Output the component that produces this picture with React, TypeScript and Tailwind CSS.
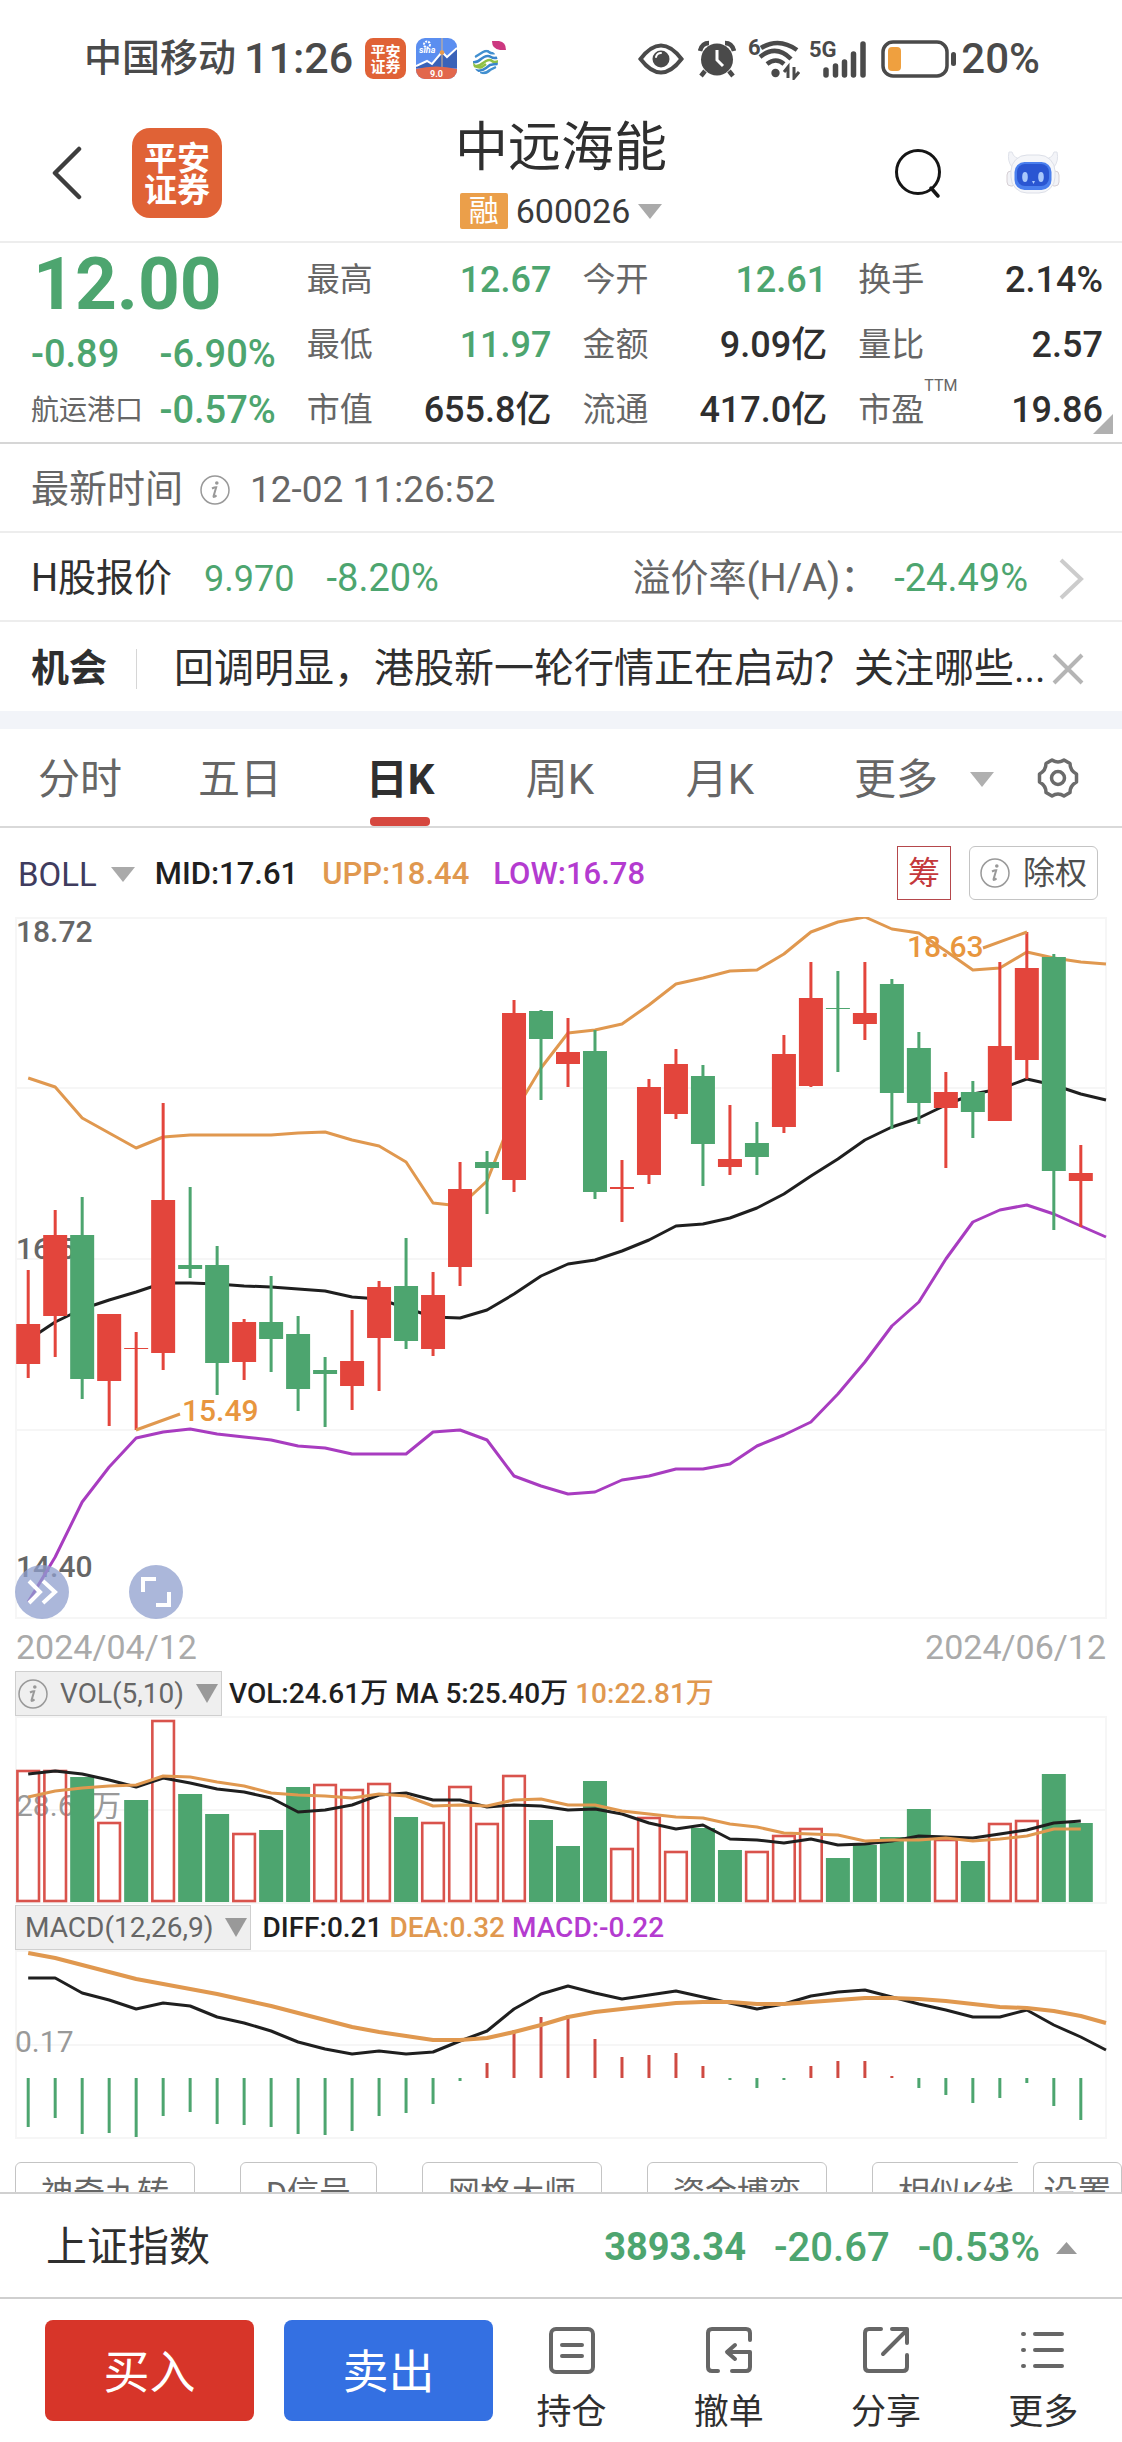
import React from "react";

const RED = "#e3453c";
const GREEN = "#4da56f";
const ORANGE = "#e0984f";
const PURPLE = "#a83cc0";
const BLACK = "#1f1f1f";
const GRID = "#f6f6f6";

/* Horizontal centre of the n-th trading day. */
const cx = (i: number) => 13.2 + i * 26.99;

const linePoints = (ys: number[]) =>
  ys.map((y, i) => `${i < 40 ? cx(i) : 1091},${y}`).join(" ");

type Dir = "R" | "G";

/* direction, high, body top, body bottom, low */
const CANDLES: [Dir, number, number, number, number][] = [
  ["R", 353, 407, 447, 461], ["R", 293, 318, 399, 440], ["G", 280, 318, 462, 482],
  ["R", 397, 397, 464, 509], ["R", 415, 431, 432, 513], ["R", 186, 283, 436, 453],
  ["G", 270, 348, 352, 361], ["G", 329, 348, 446, 478], ["R", 402, 405, 445, 463],
  ["G", 359, 405, 422, 455], ["G", 399, 417, 472, 494], ["G", 440, 453, 457, 510],
  ["R", 393, 444, 469, 493], ["R", 364, 370, 421, 474], ["G", 321, 369, 424, 432],
  ["R", 355, 378, 432, 439], ["R", 245, 272, 350, 369], ["G", 234, 245, 251, 297],
  ["R", 83, 96, 263, 275], ["G", 93, 94, 122, 183], ["R", 101, 135, 147, 170],
  ["G", 113, 134, 275, 282], ["R", 243, 270, 272, 305], ["R", 162, 170, 258, 267],
  ["R", 132, 147, 197, 202], ["G", 148, 159, 227, 269], ["R", 188, 242, 250, 258],
  ["G", 205, 226, 240, 258], ["R", 118, 137, 210, 216], ["R", 45, 81, 169, 170],
  ["G", 54, 91, 92, 155], ["R", 45, 96, 107, 123], ["G", 62, 67, 176, 212],
  ["G", 115, 131, 186, 207], ["R", 155, 175, 191, 251], ["G", 164, 175, 195, 221],
  ["R", 45, 129, 204, 204], ["R", 15, 51, 143, 162], ["G", 37, 40, 254, 313],
  ["R", 228, 256, 264, 310],
];

const UPP = [
  161, 170, 201, 216, 231, 220, 218, 218, 218, 218, 216, 215, 223, 229, 245, 286, 289, 264, 196, 151,
  116, 113, 107, 88, 67, 61, 54, 53, 37, 15, 5, 0, 12, 16, 34, 53, 51, 35, 41, 45, 47,
];
const MID = [
  423, 405, 392, 383, 375, 366, 366, 367, 369, 370, 372, 374, 380, 382, 391, 400, 401, 393, 377, 359,
  347, 343, 334, 323, 309, 307, 301, 291, 277, 259, 242, 223, 210, 201, 188, 177, 172, 162, 168, 177, 183,
];
const LOW = [
  685, 640, 585, 550, 521, 515, 512, 517, 520, 523, 529, 531, 537, 537, 537, 515, 513, 523, 559, 569,
  577, 575, 563, 559, 552, 552, 547, 529, 518, 505, 477, 445, 409, 385, 342, 305, 293, 288, 297, 309, 320,
];

const VOL_TOPS = [
  54, 54, 61, 106, 84, 4, 78, 98, 117, 114, 71, 68, 73, 67, 101, 106, 70, 107, 59, 104,
  130, 65, 132, 101, 135, 112, 134, 135, 119, 112, 142, 129, 121, 93, 123, 145, 107, 104, 58, 107,
];
const VOL_DIRS = "RRGRGRGGRGGRRRGRRRRGGGRRRGGRRRGGGGRGRRGG";
const VOL_MA5 = [
  58, 55, 58, 64, 71, 62, 67, 73, 76, 82, 96, 94, 89, 79, 77, 84, 84, 91, 89, 90,
  94, 93, 98, 107, 113, 109, 123, 124, 127, 123, 129, 128, 125, 120, 121, 122, 118, 114, 107, 105,
];
const VOL_MA10 = [
  81, 75, 72, 70, 69, 60, 61, 66, 70, 77, 79, 80, 82, 78, 80, 90, 89, 90, 84, 83,
  89, 89, 95, 98, 101, 102, 108, 111, 117, 118, 119, 125, 124, 124, 122, 125, 123, 120, 113, 113,
];

const MACD_ENDS = [
  177, 168, 184, 183, 187, 166, 162, 174, 175, 177, 184, 185, 181, 166, 163, 154, 131, 113, 80, 67,
  65, 89, 107, 105, 103, 116, 130, 138, 130, 116, 111, 111, 126, 138, 145, 153, 148, 133, 156, 170,
];
const DIFF = [
  28, 28, 43, 50, 59, 53, 56, 67, 73, 81, 92, 99, 104, 101, 104, 102, 91, 81, 59, 44,
  36, 43, 49, 45, 41, 47, 53, 59, 54, 46, 42, 40, 47, 54, 60, 67, 67, 60, 75, 87, 100,
];
const DEA = [
  3, 8, 15, 22, 29, 34, 39, 44, 50, 56, 63, 70, 77, 82, 86, 90, 90, 88, 82, 75,
  67, 62, 59, 56, 53, 52, 52, 54, 54, 52, 50, 48, 48, 49, 51, 54, 57, 58, 61, 66, 73,
];

function Line({ ys, color, width = 3 }: { ys: number[]; color: string; width?: number }) {
  return <polyline points={linePoints(ys)} fill="none" stroke={color} strokeWidth={width} strokeLinejoin="round" />;
}

function Frame({ height, rows }: { height: number; rows: number[] }) {
  return (
    <g fill="none" stroke={GRID} strokeWidth={2}>
      <rect x={1} y={1} width={1090} height={height - 2} />
      {rows.map((y) => (
        <line key={y} x1={0} x2={1092} y1={y} y2={y} />
      ))}
    </g>
  );
}

function Triangle({ className, up = false }: { className: string; up?: boolean }) {
  return (
    <svg viewBox="0 0 24 15" preserveAspectRatio="none" className={className} aria-hidden="true">
      <path d={up ? "M0 15h24L12 0z" : "M0 0h24L12 15z"} fill="currentColor" />
    </svg>
  );
}

function InfoIcon() {
  return (
    <svg viewBox="0 0 30 30" className="size-[30px] shrink-0" aria-hidden="true">
      <circle cx="15" cy="15" r="14" fill="none" stroke="#999" strokeWidth="1.5" />
      <circle cx="16.8" cy="8" r="1.8" fill="#999" />
      <path d="M12 13.500c1.500-.8 3-1.300 4.200-1.300L13.600 21c-.3 1.300.6 1.200 2.900-.6" fill="none" stroke="#999" strokeWidth="2" />
    </svg>
  );
}

function BrokerLogo({ className }: { className: string }) {
  return (
    <svg viewBox="0 0 90 90" className={className} role="img" aria-label="平安证券">
      <rect width="90" height="90" rx="18" fill="#e06236" />
      <g fill="#fff" fontSize="33" fontWeight="700" textAnchor="middle">
        <text x="45" y="42">平安</text>
        <text x="45" y="74">证券</text>
      </g>
    </svg>
  );
}

function StatusBar() {
  return (
    <div className="flex h-[117px] items-center justify-between pr-[82px] pl-[84px] font-medium text-[#4a4a4a]">
      <div className="flex items-center">
        <span className="text-[38px]">中国移动</span>
        <span className="ml-2 text-[43px]">11:26</span>
        <BrokerLogo className="ml-3 size-[41px]" />
        <svg viewBox="0 0 41 41" className="ml-[10px] size-[41px]" aria-hidden="true">
          <clipPath id="finance-app"><rect width="41" height="41" rx="9" /></clipPath>
          <g clipPath="url(#finance-app)">
            <rect width="41" height="41" fill="#5b8ef0" />
            <path d="M0 28l11-5 5 3 10-12 5 5 10-9v20H0z" fill="#3a62b8" />
            <path d="M0 28l11-5 5 3 10-12 5 5 10-9" fill="none" stroke="#fff" strokeWidth="2" />
            <path d="M26 0v30" stroke="#d8b48c" strokeWidth="1" />
            <circle cx="26" cy="14.500" r="2.300" fill="#e99a4b" />
            <path d="M0 31q20-5 41 0v10H0z" fill="#e2674c" />
            <circle cx="11" cy="6.500" r="3" fill="none" stroke="#fff" strokeWidth="2" strokeDasharray="2 1" />
            <text x="3" y="15" fontSize="9" fontStyle="italic" fontWeight="700" fill="#fff">sina</text>
            <text x="20.500" y="39" textAnchor="middle" fontSize="9" fontWeight="700" fill="#fff">9.0</text>
          </g>
        </svg>
        <svg viewBox="0 0 36 36" className="ml-[15px] size-9" aria-hidden="true">
          <clipPath id="carrier"><circle cx="13.500" cy="21" r="12.500" /></clipPath>
          <g clipPath="url(#carrier)" fill="none" strokeWidth="2.500">
            <path d="M3 16L11 11q4-2 6 0t6 1" stroke="#4290d0" />
            <path d="M0 21q5 1 9-3l3-2q4-2 7 0t8 0" stroke="#3a86cb" />
            <path d="M1 25q6 1 10-3l3-2q4-2 6 0t7 0" stroke="#8fc045" />
            <path d="M0 22q5 6 10 4l4-3" stroke="#8fc045" />
            <path d="M3 29q6 2 11-2l4-3q4-1 9-1" stroke="#3a86cb" />
            <path d="M8 32q6 1 10-3l6-3" stroke="#4290d0" />
          </g>
          <path d="M20 0h7q7 1 7 9h-6q-8-1-8-9z" fill="#cc3880" />
        </svg>
      </div>
      <div className="flex items-center">
        <svg viewBox="0 0 46 32" className="h-8 w-[46px]" aria-hidden="true">
          <path d="M2.500 16Q23-11 43.500 16 23 43 2.500 16z" fill="none" stroke="#4a4a4a" strokeWidth="4" />
          <circle cx="23" cy="16" r="8.500" fill="#4a4a4a" />
          <path d="M18 14q1-4 5-4" fill="none" stroke="#fff" strokeWidth="2" strokeLinecap="round" />
        </svg>
        <svg viewBox="0 0 38 38" className="ml-[14px] size-[38px]" aria-hidden="true">
          <circle cx="19" cy="19.500" r="16" fill="#4a4a4a" />
          <path d="M2 11Q4 3 11 3M36 11Q34 3 27 3M7 31l-4 5M31 31l4 5" stroke="#4a4a4a" strokeWidth="4.500" fill="none" />
          <path d="M19 10v10l6 6" stroke="#fff" strokeWidth="3" fill="none" />
        </svg>
        <svg viewBox="0 0 52 42" className="ml-3 h-[42px] w-[52px]" aria-hidden="true">
          <text x="0" y="17" fontSize="22" fontWeight="700" fill="#4a4a4a">6</text>
          <g fill="none" stroke="#4a4a4a" strokeWidth="4.500">
            <path d="M13 10q18-11 36 2M12 19q16-13 31 2M19 26q9-7 17 0" />
          </g>
          <circle cx="27.500" cy="35" r="4.200" fill="#4a4a4a" />
          <path d="M40 40V29l-4 5M46 29v11l5-6" fill="none" stroke="#4a4a4a" strokeWidth="3" />
        </svg>
        <svg viewBox="0 0 58 42" className="ml-[10px] h-[42px] w-[58px]" aria-hidden="true">
          <text x="-1" y="19" fontSize="22" fontWeight="700" fill="#4a4a4a">5G</text>
          <g stroke="#4a4a4a" strokeWidth="5.500" strokeLinecap="round">
            <path d="M16 37v-5M25.500 37v-9M34.500 37V24M43.500 37V16M53 37V6" />
          </g>
        </svg>
        <svg viewBox="0 0 76 38" className="ml-[13px] h-[38px] w-[76px]" aria-hidden="true">
          <rect x="2" y="2" width="64" height="34" rx="10" fill="none" stroke="#4a4a4a" strokeWidth="3.500" />
          <rect x="7" y="7" width="13" height="24" rx="4" fill="#efa03f" />
          <rect x="70" y="12" width="5" height="14" rx="2.500" fill="#4a4a4a" />
        </svg>
        <span className="ml-1 text-[42px]">20%</span>
      </div>
    </div>
  );
}

function Header() {
  return (
    <header className="grid h-[126px] grid-cols-[1fr_auto_1fr] items-center border-b-2 border-[#ededed] px-[50px] pb-3">
      <div className="flex items-center gap-[49px]">
        <button type="button" aria-label="返回">
          <svg viewBox="0 0 33 54" className="h-[54px] w-[33px]" aria-hidden="true">
            <path d="M29 3L5 27l24 24" fill="none" stroke="#3d3d3d" strokeWidth="4.500" strokeLinecap="round" strokeLinejoin="round" />
          </svg>
        </button>
        <BrokerLogo className="size-[90px]" />
      </div>
      <div className="flex flex-col items-center">
        <h1 className="text-[53px] leading-[62px] text-[#2f2f2f]">中远海能</h1>
        <button type="button" className="mt-[14px] flex items-center gap-2 text-[#3a3a3a]">
          <span className="flex h-9 w-12 items-center justify-center rounded-xs bg-[#eb9f4a] text-[30px] leading-9 text-white">融</span>
          <span className="text-[34px] leading-9">600026</span>
          <Triangle className="h-[15px] w-6 text-[#aaa]" />
        </button>
      </div>
      <div className="flex items-center justify-end gap-[63px] pr-3">
        <button type="button" aria-label="搜索">
          <svg viewBox="0 0 50 52" className="h-[52px] w-[50px]" aria-hidden="true">
            <circle cx="25" cy="25" r="21.500" fill="none" stroke="#151515" strokeWidth="3" />
            <path d="M38 41l7 8" stroke="#151515" strokeWidth="3.500" strokeLinecap="round" />
          </svg>
        </button>
        <button type="button" aria-label="智能助手">
          <svg viewBox="0 0 54 46" className="h-[46px] w-[54px]" aria-hidden="true">
            <path d="M3 2q-2 9 3 15l10-8Q8 9 6 2zM51 2q2 9-3 15L38 9q8 0 10-7z" fill="#f3f4f8" stroke="#dfe2ea" />
            <rect x="1" y="21" width="9" height="15" rx="4" fill="#f2f3f7" stroke="#d6cfd4" />
            <rect x="44" y="21" width="9" height="15" rx="4" fill="#f2f3f7" stroke="#d6cfd4" />
            <rect x="5" y="5" width="44" height="38" rx="16" fill="#f5f6f9" stroke="#dcdfe8" />
            <rect x="8.500" y="12" width="37" height="28" rx="10" fill="#4a7fee" />
            <rect x="11" y="14" width="32" height="22" rx="8" fill="#2a56d2" />
            <ellipse cx="19" cy="27" rx="2.800" ry="5" fill="#a9c8fb" />
            <ellipse cx="35" cy="27" rx="2.800" ry="5" fill="#a9c8fb" />
            <path d="M26 31h3l-1.500 3z" fill="#a9c8fb" />
          </svg>
        </button>
      </div>
    </header>
  );
}

function Stat({ label, sup, value, green = false }: { label: string; sup?: string; value: string; green?: boolean }) {
  return (
    <div className="flex h-[65px] items-center justify-between">
      <dt className="relative text-[33px] leading-[48px] text-[#666]">
        {label}
        {sup && <span className="absolute -top-2 left-full text-base leading-none">{sup}</span>}
      </dt>
      <dd className={green ? "text-[36px] font-medium text-[#4da56f]" : "text-[36px] font-medium text-[#2f2f2f]"}>{value}</dd>
    </div>
  );
}

function Quote() {
  return (
    <section className="relative grid grid-cols-4 gap-x-[31px] border-b-2 border-[#d6d6d6] pt-1 pr-[19px] pl-[31px]">
      <div className="text-[38px] font-medium text-[#4da56f]">
        <p className="flex h-[75px] items-center pl-[2px] text-[73px] leading-none font-bold">12.00</p>
        <p className="flex h-[65px] items-center justify-between">
          <span>-0.89</span>
          <span>-6.90%</span>
        </p>
        <p className="flex h-[47px] items-center justify-between">
          <span className="text-[28px] font-normal text-[#666]">航运港口</span>
          <span>-0.57%</span>
        </p>
      </div>
      <dl>
        <Stat label="最高" value="12.67" green />
        <Stat label="最低" value="11.97" green />
        <Stat label="市值" value="655.8亿" />
      </dl>
      <dl>
        <Stat label="今开" value="12.61" green />
        <Stat label="金额" value="9.09亿" />
        <Stat label="流通" value="417.0亿" />
      </dl>
      <dl>
        <Stat label="换手" value="2.14%" />
        <Stat label="量比" value="2.57" />
        <Stat label="市盈" sup="TTM" value="19.86" />
      </dl>
      <svg viewBox="0 0 20 20" className="absolute right-[9px] bottom-2 size-5" aria-hidden="true">
        <path d="M20 0v20H0z" fill="#b0b0b0" />
      </svg>
    </section>
  );
}

function InfoRows() {
  return (
    <>
      <div className="flex h-[89px] items-center border-b-2 border-[#ededed] pt-1 pl-[31px] text-[#666]">
        <span className="text-[38px]">最新时间</span>
        <span className="ml-[17px]"><InfoIcon /></span>
        <time className="ml-5 text-[37px]">12-02 11:26:52</time>
      </div>
      <a href="#h-share" className="flex h-[89px] items-center border-b-2 border-[#ededed] pt-1 pr-[37px] pl-[31px] text-[38px] text-[#4da56f]">
        <span className="text-[#2f2f2f]">H股报价</span>
        <span className="ml-8 text-[36px]">9.970</span>
        <span className="ml-8">-8.20%</span>
        <span className="ml-auto text-[#666]">溢价率(H/A)：</span>
        <span className="ml-4">-24.49%</span>
        <svg viewBox="0 0 28 44" className="ml-[29px] h-11 w-7" aria-hidden="true">
          <path d="M4 3l20 19L4 41" fill="none" stroke="#ccc" strokeWidth="4" />
        </svg>
      </a>
      <div className="flex h-[89px] items-center pt-1 pr-[37px] pl-[31px] text-[#2f2f2f]">
        <strong className="text-[38px] font-bold">机会</strong>
        <span className="ml-[29px] h-10 w-px bg-[#d6d6d6]" />
        <a href="#news" className="ml-[37px] min-w-0 flex-1 overflow-hidden text-[40px] leading-[64px] whitespace-nowrap">
          回调明显，港股新一轮行情正在启动？关注哪些...
        </a>
        <button type="button" aria-label="关闭">
          <svg viewBox="0 0 34 34" className="size-[34px]" aria-hidden="true">
            <path d="M3 3l28 28M31 3L3 31" stroke="#b5b5b5" strokeWidth="4" />
          </svg>
        </button>
      </div>
    </>
  );
}

function Tabs() {
  const tabs = ["分时", "五日", "日K", "周K", "月K"];
  return (
    <nav className="grid h-[99px] grid-cols-[repeat(5,160fr)_322fr] border-b-2 border-[#d9d9d9] text-[42px] text-[#666]">
      {tabs.map((t) =>
        t === "日K" ? (
          <button key={t} type="button" aria-pressed="true" className="relative pt-1 font-bold text-[#2f2f2f]">
            {t}
            <span className="absolute bottom-0 left-1/2 h-[9px] w-[60px] -translate-x-1/2 rounded-sm bg-[#d6483f]" />
          </button>
        ) : (
          <button key={t} type="button" aria-pressed="false" className="pt-1">{t}</button>
        ),
      )}
      <div className="flex items-center justify-between pr-[42px] pl-[54px]">
        <button type="button" className="flex items-center gap-[32px] pt-1">
          更多
          <Triangle className="h-[15px] w-6 text-[#b0b0b0]" />
        </button>
        <button type="button" aria-label="图表设置">
          <svg viewBox="0 0 44 44" className="size-11" aria-hidden="true">
            <path
              d="M16 4q6 4 12 0l6 3.500q0 7 6.500 10.500v8Q34 29.500 34 36.500L28 40q-6-4-12 0l-6-3.500Q10 29.500 3.500 26v-8Q10 14.500 10 7.500z"
              fill="none" stroke="#6b6b6b" strokeWidth="3.500" strokeLinejoin="round"
            />
            <circle cx="22" cy="22" r="6.500" fill="none" stroke="#6b6b6b" strokeWidth="3.500" />
          </svg>
        </button>
      </div>
    </nav>
  );
}

function PriceChart() {
  return (
    <section>
      <div className="flex h-[89px] items-center pr-6 pl-[18px] text-[31px] font-medium">
        <button type="button" className="flex items-center gap-[14px] pt-1 text-[33px] font-normal text-[#3f3c5e]">
          BOLL
          <Triangle className="h-[15px] w-6 text-[#aaa]" />
        </button>
        <p className="flex gap-6 pt-1 pl-5">
          <span className="text-[#1f1f1f]">MID:17.61</span>
          <span className="text-[#e0984f]">UPP:18.44</span>
          <span className="text-[#b43bd0]">LOW:16.78</span>
        </p>
        <button type="button" className="ml-auto flex size-[54px] items-center justify-center border border-[#b5484c] text-[32px] font-normal text-[#c4383c]">筹</button>
        <button type="button" className="ml-[18px] flex h-[54px] items-center gap-[13px] rounded-md border border-[#c4c4c4] px-[10px] text-[32px] font-normal text-[#4f4f4f]">
          <InfoIcon />
          除权
        </button>
      </div>
      <div className="relative mx-[15px]">
        <svg viewBox="0 0 1092 702" className="block w-full" role="img" aria-label="日K线与布林线">
          <Frame height={702} rows={[171, 342, 513]} />
          <g fontSize="30" fontWeight="500" fill="#666">
            <text x="1" y="25">18.72</text>
            <text x="1" y="342">16.56</text>
            <text x="1" y="660">14.40</text>
          </g>
          <Line ys={UPP} color={ORANGE} />
          <Line ys={MID} color={BLACK} />
          <Line ys={LOW} color={PURPLE} />
          {CANDLES.map(([dir, high, top, bottom, low], i) => (
            <g key={i} fill={dir === "R" ? RED : GREEN}>
              <rect x={cx(i) - 1.5} y={high} width={3} height={low - high} />
              <rect x={cx(i) - 12} y={top} width={24} height={bottom - top} />
            </g>
          ))}
          <g fill="none" stroke={ORANGE} strokeWidth={3}>
            <path d="M121 513l44-16M968 31l44-16" />
          </g>
          <g fontSize="30" fontWeight="500" fill="#e8963e">
            <text x="167" y="504">15.49</text>
            <text x="892" y="40">18.63</text>
          </g>
        </svg>
        <button type="button" aria-label="展开" className="absolute bottom-0 left-0 size-[54px] rounded-full bg-[#8f9fce]/75">
          <svg viewBox="0 0 54 54" aria-hidden="true">
            <path d="M14 16l11 11-11 11M28 16l12 11-12 11" fill="none" stroke="#fff" strokeWidth="4" />
          </svg>
        </button>
        <button type="button" aria-label="全屏" className="absolute bottom-0 left-[114px] size-[54px] rounded-full bg-[#8f9fce]/75">
          <svg viewBox="0 0 54 54" aria-hidden="true">
            <path d="M14 27V14h13M40 27v13H27" fill="none" stroke="#fff" strokeWidth="4" />
          </svg>
        </button>
      </div>
      <div className="flex h-[52px] items-center justify-between px-4 pt-1 text-[34px] leading-10 text-[#aaa]">
        <time>2024/04/12</time>
        <time>2024/06/12</time>
      </div>
    </section>
  );
}

function IndicatorPicker({ children }: { children: React.ReactNode }) {
  return (
    <button type="button" className="flex h-[45px] items-center border border-[#cfcfcf] bg-[#efefef] pr-[3px] text-[28px] font-normal text-[#666]">
      {children}
      <Triangle className="ml-3 h-[19px] w-[22px] text-[#999]" />
    </button>
  );
}

function VolumeChart() {
  return (
    <section className="mx-[15px]">
      <div className="flex items-center gap-[7px] text-[28px] leading-9 font-medium text-[#1f1f1f]">
        <IndicatorPicker>
          <span className="mr-3 ml-[2px]"><InfoIcon /></span>
          VOL(5,10)
        </IndicatorPicker>
        <span>VOL:24.61万</span>
        <span>MA 5:25.40万</span>
        <span className="text-[#e0984f]">10:22.81万</span>
      </div>
      <svg viewBox="0 0 1092 188" className="block w-full" role="img" aria-label="成交量">
        <Frame height={188} rows={[94]} />
        <text x="1" y="100" fontSize="30" fill="#999">28.67万</text>
        {VOL_TOPS.map((top, i) =>
          VOL_DIRS[i] === "R" ? (
            <rect key={i} x={cx(i) - 10.8} y={top + 1} width={21.6} height={184 - top} fill="none" stroke="#d9534c" strokeWidth={2.6} />
          ) : (
            <rect key={i} x={cx(i) - 12} y={top} width={24} height={186 - top} fill={GREEN} />
          ),
        )}
        <Line ys={VOL_MA5} color={BLACK} />
        <Line ys={VOL_MA10} color={ORANGE} />
      </svg>
    </section>
  );
}

function MacdChart() {
  return (
    <section className="mx-[15px] mt-px">
      <div className="flex items-center gap-[7px] text-[28px] leading-9 font-medium">
        <IndicatorPicker>
          <span className="ml-[9px]">MACD(12,26,9)</span>
        </IndicatorPicker>
        <span className="ml-1 text-[#1f1f1f]">DIFF:0.21</span>
        <span className="text-[#e0984f]">DEA:0.32</span>
        <span className="text-[#b43bd0]">MACD:-0.22</span>
      </div>
      <svg viewBox="0 0 1092 189" className="block w-full" role="img" aria-label="MACD">
        <Frame height={189} rows={[95]} />
        <text x="0" y="102" fontSize="30" fill="#999">0.17</text>
        {MACD_ENDS.map((end, i) => (
          <line key={i} x1={cx(i)} x2={cx(i)} y1={128} y2={end} stroke={end < 128 ? "#cf4a42" : GREEN} strokeWidth={3} />
        ))}
        <Line ys={DIFF} color={BLACK} />
        <Line ys={DEA} color={ORANGE} width={4} />
      </svg>
    </section>
  );
}

function ToolChips() {
  const chip = "h-[62px] shrink-0 rounded-md border border-[#c4c4c4] px-[25px] text-[32px] leading-[60px] whitespace-nowrap";
  return (
    <div className="mt-[23px] flex h-8 items-start overflow-hidden border-b-2 border-[#d0d0d0] pl-[15px] text-[#666]">
      <div className="flex min-w-0 flex-1 gap-[45px] overflow-hidden">
        {["神奇九转", "D信号", "网格大师", "资金博弈", "相似K线"].map((t) => (
          <button key={t} type="button" className={chip}>{t}</button>
        ))}
      </div>
      <button type="button" className="ml-[15px] h-[62px] w-[89px] shrink-0 rounded-md border border-[#c4c4c4] text-[34px] leading-[60px]">设置</button>
    </div>
  );
}

function IndexBar() {
  return (
    <button type="button" className="flex h-[105px] w-full items-center border-b-2 border-[#cfcfcf] pt-1 pr-[45px] pl-[46px] text-[40px] font-medium text-[#4da56f]">
      <span className="text-[41px] font-normal text-[#2f2f2f]">上证指数</span>
      <span className="ml-auto text-[38px] font-bold">3893.34</span>
      <span className="ml-7">-20.67</span>
      <span className="ml-7">-0.53%</span>
      <Triangle up className="ml-4 h-3 w-[21px] text-[#999]" />
    </button>
  );
}

function Action({ label, children }: { label: string; children: React.ReactNode }) {
  return (
    <button type="button" className="flex flex-1 flex-col items-center text-[35px] leading-[52px] text-[#2f2f2f]">
      <svg viewBox="0 0 50 50" className="mb-3 size-[50px]" fill="none" stroke="#666" strokeWidth="4" strokeLinecap="round" strokeLinejoin="round" aria-hidden="true">
        {children}
      </svg>
      {label}
    </button>
  );
}

function BottomBar() {
  return (
    <footer className="flex h-[143px] items-start pl-[45px]">
      <div className="mt-[21px] flex gap-[30px] text-[46px] text-white">
        <button type="button" className="h-[101px] w-[209px] rounded-lg bg-[#d73529] pt-1">买入</button>
        <button type="button" className="h-[101px] w-[209px] rounded-lg bg-[#3470e2] pt-1">卖出</button>
      </div>
      <div className="mt-[26px] flex flex-1">
        <Action label="持仓">
          <rect x="4" y="4" width="42" height="43" rx="5" />
          <path d="M15 20h20M15 31h20" />
        </Action>
        <Action label="撤单">
          <path d="M46 15V8q0-4-4-4H8Q4 4 4 8v34q0 4 4 4h6M28 46h14q4 0 4-4V27H24M31 20l-8 7 8 7" />
        </Action>
        <Action label="分享">
          <path d="M20 4H8Q4 4 4 8v34q0 4 4 4h34q4 0 4-4V30M22 29L46 5M31 4h15v14" />
        </Action>
        <Action label="更多">
          <path d="M17 9h27M17 25h27M17 41h27M5 9h1M5 25h1M5 41h1" />
        </Action>
      </div>
    </footer>
  );
}

export default function App() {
  return (
    <main lang="zh-CN" className="w-full bg-white font-['Roboto','Noto_Sans_CJK_SC',sans-serif] leading-normal">
      <StatusBar />
      <Header />
      <Quote />
      <InfoRows />
      <div className="h-[18px] bg-[#f2f4f9]" />
      <Tabs />
      <PriceChart />
      <VolumeChart />
      <MacdChart />
      <ToolChips />
      <IndexBar />
      <BottomBar />
    </main>
  );
}
